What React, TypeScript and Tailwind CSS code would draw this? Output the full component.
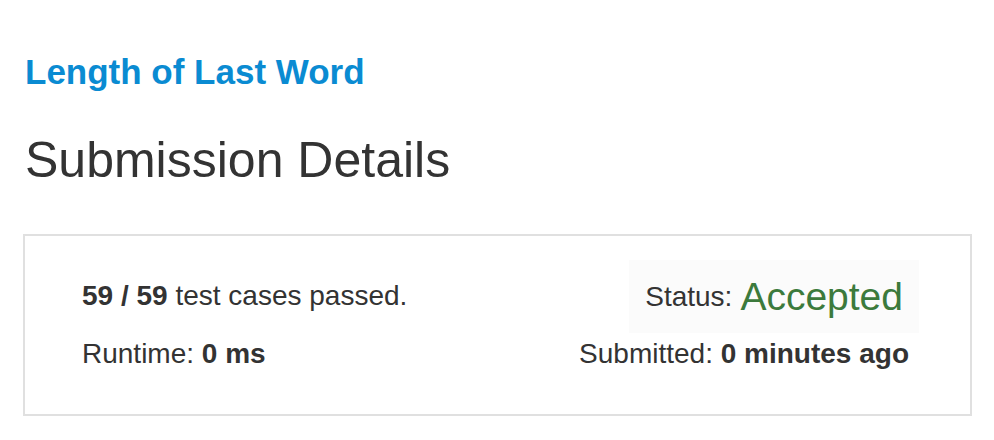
import React from "react";

const App = () => {
  return (
    <div className="w-[994px] h-[440px] bg-white pl-[25px] pt-[52px] text-[#333333]" style={{ fontFamily: '"Liberation Sans", Arial, sans-serif' }}>
      <a href="#" className="block text-[35px] leading-[40px] font-bold text-[#0a8bd2]">
        Length of Last Word
      </a>
      <h1 className="mt-[40px] text-[50px] leading-[56px] font-normal text-[#333333]">Submission Details</h1>
      <div className="mt-[46px] ml-[-2px] w-[949px] h-[182px] border-2 border-[#e0e0e0] flex justify-between">
        <div className="pl-[57px] pt-[43px] flex flex-col gap-[24px]">
          <p className="text-[28px] leading-[34px]">
            <b>59 / 59</b> test cases passed.
          </p>
          <p className="text-[28px] leading-[34px]">
            Runtime: <b>0 ms</b>
          </p>
        </div>
        <div className="pr-[61px] pt-[24px] flex flex-col items-end">
          <div className="mr-[-10px] h-[73px] px-[16px] flex items-center bg-[#fbfbfb]">
            <span className="text-[28px] leading-[34px]">Status:</span>
            <span className="ml-[8px] text-[39px] leading-[44px] text-[#3c7a3c]">Accepted</span>
          </div>
          <p className="mt-[4px] text-[28px] leading-[34px]">
            Submitted: <b>0 minutes ago</b>
          </p>
        </div>
      </div>
    </div>
  );
};

export default App;
